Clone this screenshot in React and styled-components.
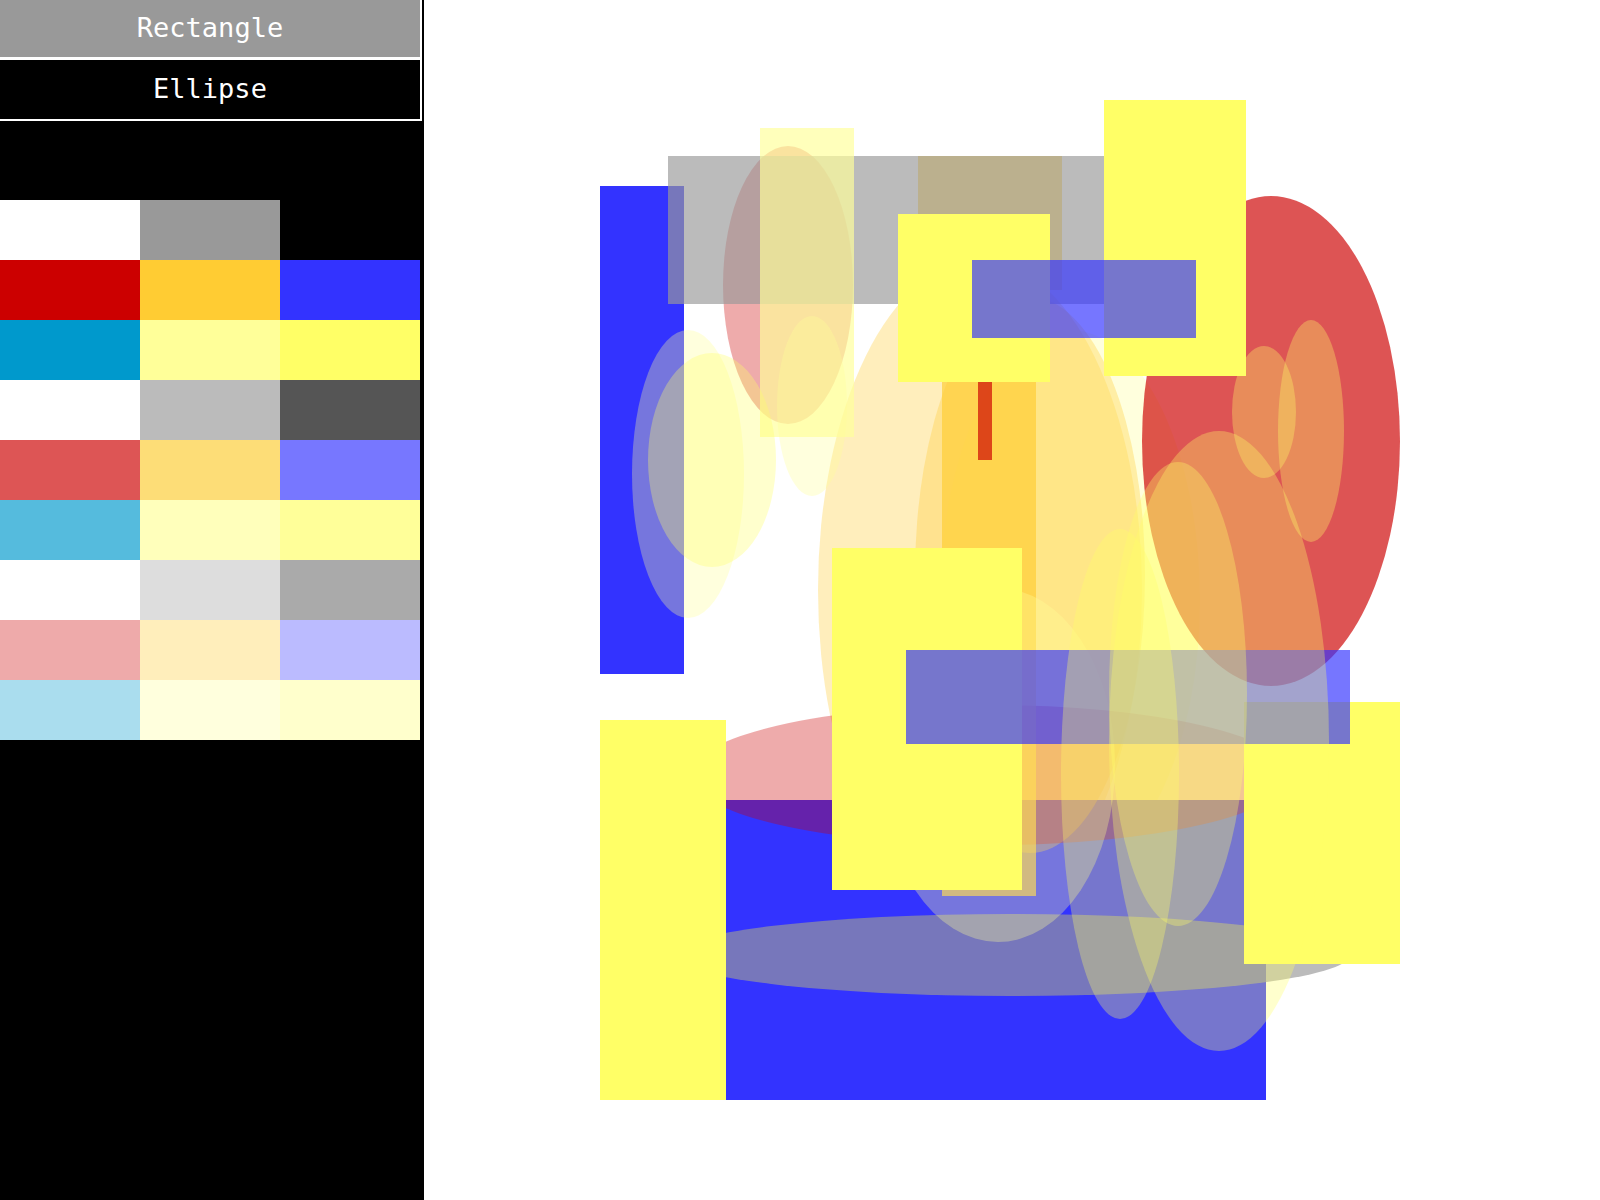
import React from "react";
import styled, { createGlobalStyle } from "styled-components";

const GlobalStyle = createGlobalStyle`
  html, body { margin: 0; padding: 0; background: #ffffff; }
  body { font-family: "DejaVu Sans Mono", "Liberation Mono", monospace; }
`;

const PANEL_W = 424;

const Page = styled.div`
  display: flex;
  width: 1600px;
  height: 1200px;
  overflow: hidden;
`;

const Sidebar = styled.aside`
  width: ${PANEL_W}px;
  flex: 0 0 ${PANEL_W}px;
  height: 1200px;
  background: #000000;
  display: flex;
  flex-direction: column;
`;

const ToolButton = styled.button`
  box-sizing: border-box;
  width: 422px;
  height: ${(p) => p.$h}px;
  margin: 0;
  padding: 0 0 2px;
  border: none;
  border-right: 2px solid #ffffff;
  border-bottom: ${(p) => p.$border}px solid #ffffff;
  background: ${(p) => (p.$active ? "#999999" : "#000000")};
  color: #ffffff;
  font-family: "DejaVu Sans Mono", "Liberation Mono", monospace;
  font-size: 27px;
  text-align: center;
  cursor: pointer;
`;

const Spacer = styled.div`
  height: 79px;
`;

const Palette = styled.div`
  display: grid;
  grid-template-columns: repeat(3, 140px);
  grid-auto-rows: 60px;
  width: 420px;
`;

const Swatch = styled.div`
  background: ${(p) => p.$color};
`;

const Canvas = styled.main`
  position: relative;
  flex: 1;
  height: 1200px;
  background: #ffffff;
  overflow: hidden;
`;

const Shape = styled.div.attrs((p) => ({
  style: {
    left: p.$x - PANEL_W,
    top: p.$y,
    width: p.$w,
    height: p.$h,
    background: p.$fill,
  },
}))`
  position: absolute;
  border-radius: ${(p) => (p.$round ? "50%" : "0")};
`;

const palette = [
  "#ffffff", "#999999", "#000000",
  "#cc0000", "#ffcc33", "#3333ff",
  "#0099cc", "#ffff99", "#ffff66",
  "#ffffff", "#bbbbbb", "#555555",
  "#dd5555", "#fddd77", "#7777ff",
  "#55bbdd", "#ffffbb", "#ffff99",
  "#ffffff", "#dddddd", "#aaaaaa",
  "#eeaaaa", "#ffeebb", "#bbbbff",
  "#aaddee", "#ffffdd", "#ffffcc",
];

const C = {
  yellow: "#ffff66",
  yellow33: "rgba(255,255,102,0.33)",
  pale33: "rgba(255,255,153,0.33)",
  pale67: "rgba(255,255,153,0.67)",
  orange67: "rgba(255,204,51,0.67)",
  orange33: "rgba(255,204,51,0.33)",
  red67: "rgba(204,0,0,0.67)",
  red33: "rgba(204,0,0,0.33)",
  blue: "#3333ff",
  blue67: "rgba(51,51,255,0.67)",
  gray67: "rgba(153,153,153,0.67)",
};

const rect = (x, y, w, h, fill) => ({ x, y, w, h, fill, round: false });
const ell = (cx, cy, rx, ry, fill) => ({
  x: cx - rx,
  y: cy - ry,
  w: rx * 2,
  h: ry * 2,
  fill,
  round: true,
});

const shapes = [
  ell(980, 590, 162, 330, C.orange33),
  ell(1070, 600, 130, 270, C.pale33),
  rect(726, 800, 540, 300, C.blue),
  ell(1030, 575, 115, 278, C.orange33),
  ell(990, 775, 300, 70, C.red33),
  ell(1011, 955, 339, 41, C.gray67),
  ell(788, 285, 65, 139, C.red33),
  rect(918, 156, 144, 134, C.orange67),
  rect(600, 186, 84, 488, C.blue),
  rect(942, 320, 94, 576, C.orange67),
  rect(978, 330, 14, 130, C.red67),
  rect(668, 156, 436, 148, C.gray67),
  rect(760, 128, 94, 309, C.pale67),
  ell(688, 474, 56, 144, C.pale33),
  ell(712, 460, 64, 107, C.yellow33),
  ell(812, 406, 35, 90, C.pale33),
  ell(998, 765, 117, 177, C.pale33),
  rect(600, 720, 126, 380, C.yellow),
  rect(832, 548, 190, 342, C.yellow),
  ell(1271, 441, 129, 245, C.red67),
  rect(1244, 702, 156, 262, C.yellow),
  rect(906, 650, 444, 94, C.blue67),
  ell(1264, 412, 32, 66, C.yellow33),
  ell(1311, 431, 33, 111, C.yellow33),
  ell(1178, 694, 69, 232, C.yellow33),
  ell(1219, 741, 110, 310, C.yellow33),
  ell(1120, 774, 59, 245, C.yellow33),
  rect(898, 214, 152, 168, C.yellow),
  rect(1104, 100, 142, 276, C.yellow),
  rect(972, 260, 224, 78, C.blue67),
];

export default function App() {
  return (
    <>
      <GlobalStyle />
      <Page>
        <Sidebar>
          <ToolButton $active $h={60} $border={3}>Rectangle</ToolButton>
          <ToolButton $h={61} $border={2}>Ellipse</ToolButton>
          <Spacer />
          <Palette>
            {palette.map((c, i) => (
              <Swatch key={i} $color={c} />
            ))}
          </Palette>
        </Sidebar>
        <Canvas>
          {shapes.map((s, i) => (
            <Shape
              key={i}
              $x={s.x}
              $y={s.y}
              $w={s.w}
              $h={s.h}
              $fill={s.fill}
              $round={s.round}
            />
          ))}
        </Canvas>
      </Page>
    </>
  );
}
